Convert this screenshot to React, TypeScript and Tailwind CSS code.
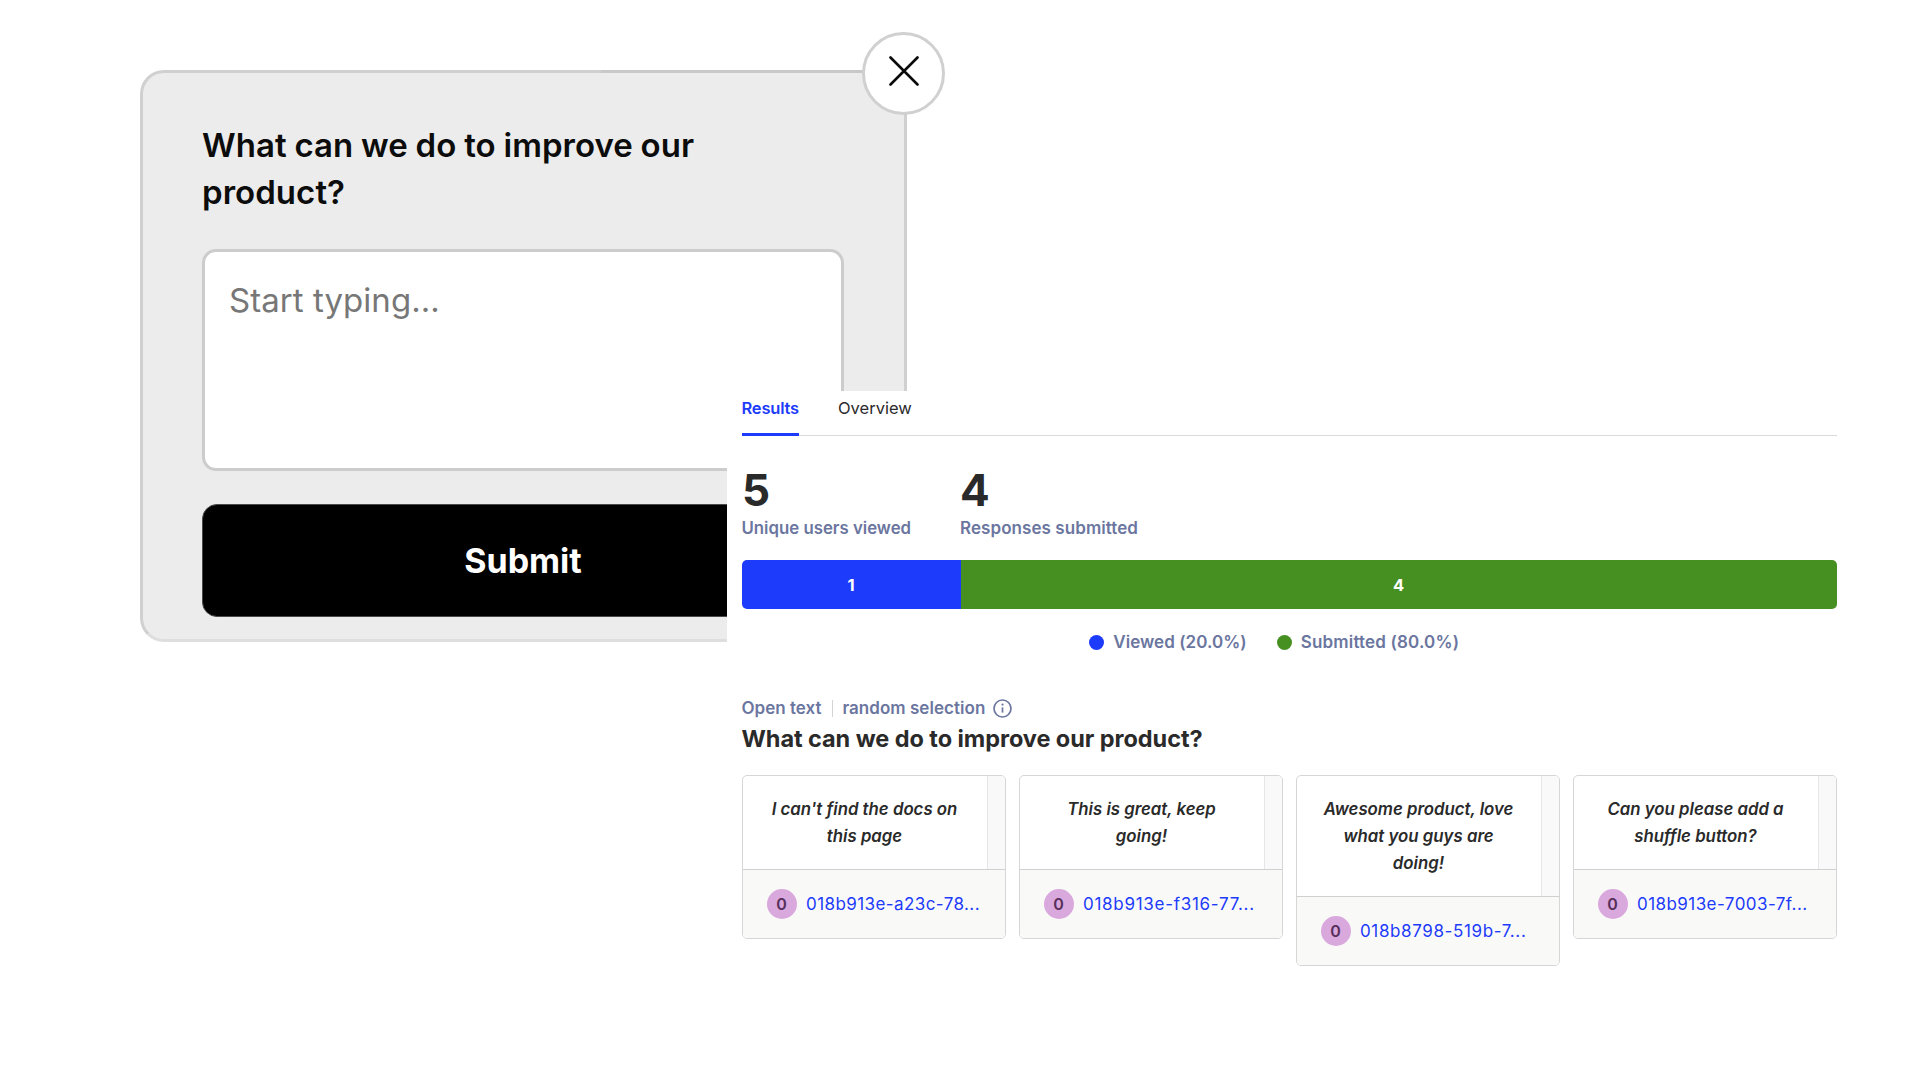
import { Fragment } from 'react';

type Response = { lines: string[]; id: string; spacing: string };

const responses: Response[] = [
  { lines: ["I can't find the docs on", 'this page'], id: '018b913e-a23c-78...', spacing: 'tracking-[0.42px]' },
  { lines: ['This is great, keep', 'going!'], id: '018b913e-f316-77...', spacing: 'tracking-[0.72px]' },
  { lines: ['Awesome product, love', 'what you guys are', 'doing!'], id: '018b8798-519b-7...', spacing: 'tracking-[0.62px]' },
  { lines: ['Can you please add a', 'shuffle button?'], id: '018b913e-7003-7f...', spacing: 'tracking-[0.44px]' },
];

function SurveyPopup() {
  return (
    <section className="relative ml-[140px] flex h-[572px] w-[767px] flex-col rounded-[24px] border-[3px] border-[#d0d0d0] border-b-[#dedede] bg-[#ececec] px-[59px] pt-[49px]">
      <div className="absolute -top-[3px] left-[458px] h-[3px] w-[270px] bg-[#c8c8c8]" />
      <h1 className="text-[33px] leading-[47px] font-semibold tracking-[0.05px] text-[#0c0c0c] [word-spacing:-0.6px]">
        What can we do to improve our
        <br />
        product?
      </h1>
      <div className="mt-[33px] h-[222px] w-[642px] rounded-[14px] border-[3px] border-[#cccccc] bg-white pt-7 pl-6 text-[33px] leading-10 tracking-[0.05px] text-[#777777]">
        Start typing...
      </div>
      <button className="mt-[33px] flex h-[113px] w-[642px] items-center justify-center rounded-[15px] border border-[#4a4a4a] bg-black text-[34px] font-bold text-white">
        Submit
      </button>
      <button
        aria-label="Close"
        className="absolute -top-[41px] -right-[41px] flex size-[83px] items-center justify-center rounded-full border-[3px] border-[#d0d0d0] bg-white"
      >
        <svg className="-mt-[5px] size-[30px]" viewBox="0 0 30 30" fill="none" stroke="#0a0a0a" strokeWidth="2.6" strokeLinecap="round">
          <path d="M1.5 1.5 28.5 28.5M28.5 1.5 1.5 28.5" />
        </svg>
      </button>
    </section>
  );
}

function InfoIcon() {
  return (
    <svg className="ml-[8px] size-[19px]" viewBox="0 0 19 19" fill="none">
      <circle cx="9.5" cy="9.5" r="8.5" stroke="#6b769f" strokeWidth="1.7" />
      <path d="M9.5 8.4v5.2" stroke="#6b769f" strokeWidth="1.7" />
      <circle cx="9.5" cy="5.6" r="1.1" fill="#6b769f" />
    </svg>
  );
}

function ResponseCard({ lines, id, spacing }: Response) {
  return (
    <article className="overflow-hidden rounded-[5px] border border-[#d6d6d6] bg-white">
      <div className="flex border-b border-[#d0d0d0]">
        <p className="flex-1 pt-5 pb-[19px] text-center text-[16.8px] leading-[27px] font-semibold text-[#2a2a2a] italic">
          {lines.map((line, i) => (
            <Fragment key={line}>
              {i > 0 && <br />}
              {line}
            </Fragment>
          ))}
        </p>
        <div className="w-[18px] border-l border-[#e6e6e6] bg-[#f9f9f9]" />
      </div>
      <div className="flex h-[68px] items-center bg-[#f9f9f8] pl-6">
        <span className="flex size-[30px] items-center justify-center rounded-full bg-[#d9a8dd] text-[16px] font-semibold text-[#56305a]">0</span>
        <a className={`ml-[9.5px] text-[17px] leading-6 whitespace-nowrap text-[#1d3bfa] ${spacing}`}>{id}</a>
      </div>
    </article>
  );
}

function ResultsPanel() {
  return (
    <section className="absolute top-[391px] left-[727px] h-[689px] w-[1193px] bg-white pt-[5px] pr-[83.5px] pl-[14.5px]">
      <nav className="flex h-10 gap-[39.5px] border-b border-[#dadada] text-[16.5px] leading-6">
        <span className="h-10 w-[57px] border-b-[3px] border-[#1d3bfa] font-semibold tracking-[-0.2px] text-[#1d3bfa]">Results</span>
        <span className="text-[#2a2a2a]">Overview</span>
      </nav>

      <div className="mt-[30px] flex">
        <div className="w-[218.5px]">
          <div className="pl-[0.5px] text-[44px] leading-[48px] font-bold text-[#2a2a2a]">5</div>
          <div className="mt-[2px] text-[16.8px] leading-6 font-semibold text-[#6b769f]">Unique users viewed</div>
        </div>
        <div>
          <div className="text-[44px] leading-[48px] font-bold text-[#2a2a2a]">4</div>
          <div className="mt-[2px] text-[17px] leading-6 font-semibold tracking-[0.07px] text-[#6b769f]">Responses submitted</div>
        </div>
      </div>

      <div className="mt-5 flex h-[49px] overflow-hidden rounded-[5px] text-[16.5px] font-bold text-white">
        <div className="flex w-1/5 items-center justify-center bg-[#1d3bfa] pt-px">1</div>
        <div className="flex w-4/5 items-center justify-center bg-[#469022] pt-px">4</div>
      </div>

      <div className="mt-[21px] flex justify-center text-[17px] leading-6 font-semibold text-[#6b769f]">
        <span className="mr-[30px] flex items-center gap-[9.5px] tracking-[0.05px]">
          <i className="size-[15px] rounded-full bg-[#1d3bfa]" />
          Viewed (20.0%)
        </span>
        <span className="mr-[30px] flex items-center gap-[9px] tracking-[0.17px]">
          <i className="size-[15px] rounded-full bg-[#469022]" />
          Submitted (80.0%)
        </span>
      </div>

      <div className="mt-[42px] flex h-6 items-center text-[17px] leading-6 font-semibold text-[#6b769f]">
        <span>Open text</span>
        <span className="mr-[9.5px] ml-[10.5px] h-[17px] w-px bg-[#d4d4d4]" />
        <span className="tracking-[0.04px]">random selection</span>
        <InfoIcon />
      </div>
      <h2 className="mt-1 text-[23.5px] leading-[30px] font-bold tracking-[-0.06px] text-[#2a2a2a]">What can we do to improve our product?</h2>

      <div className="mt-[21px] grid grid-cols-4 items-start gap-[13px]">
        {responses.map((r) => (
          <ResponseCard key={r.id} {...r} />
        ))}
      </div>
    </section>
  );
}

export default function App() {
  return (
    <main className="relative h-[1080px] w-[1920px] overflow-hidden bg-white pt-[70px] font-['Inter',sans-serif]">
      <SurveyPopup />
      <ResultsPanel />
    </main>
  );
}
